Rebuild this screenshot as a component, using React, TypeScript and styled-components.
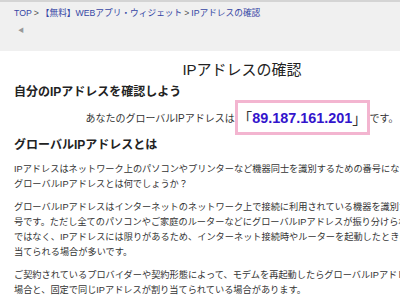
import React from 'react';
import styled, { createGlobalStyle } from 'styled-components';

const GlobalStyle = createGlobalStyle`
    html, body {
        margin: 0;
        padding: 0;
        background: #fff;
        overflow: hidden;
    }
    body {
        font-family: 'Liberation Sans', 'Noto Sans CJK JP', sans-serif;
        color: #333;
    }
`;

const Page = styled.div`
    width: 400px;
    height: 304px;
    overflow: hidden;
`;

const Header = styled.div`
    height: 44px;
    border-top: 2px solid #d4d4d4;
    background: #f0f0f0;
    padding: 5px 14px 0;
    box-sizing: content-box;
    width: 456px;
`;

const Crumbs = styled.div`
    font-size: 8.7px;
    line-height: 12px;
    white-space: nowrap;
    color: #444;
`;

const Crumb = styled.a`
    color: #3646a4;
    text-decoration: none;
`;

const Sep = styled.span`
    margin: 0 2px;
    color: #555;
`;

const Arrow = styled.div`
    margin: 6px 0 0 4px;
    font-size: 6px;
    line-height: 10px;
    color: #999;
`;

const Main = styled.div`
    width: 456px;
    padding: 0 14px;
`;

const Title = styled.h1`
    margin: 9px 0 0;
    font-size: 15px;
    line-height: 20px;
    font-weight: normal;
    color: #222;
    text-align: center;
`;

const Heading = styled.h2<{ $top: number }>`
    margin: ${p => p.$top}px 0 0;
    font-size: 12px;
    line-height: 16px;
    font-weight: bold;
    color: #222;
`;

const IpRow = styled.div`
    display: flex;
    justify-content: center;
    align-items: center;
    font-size: 10px;
    color: #333;
    white-space: nowrap;
`;

const IpBox = styled.span`
    display: inline-flex;
    align-items: center;
    height: 29px;
    border: 3px solid #f3b5d0;
    font-size: 14.4px;
    color: #333;
`;

const Ip = styled.strong`
    color: #3314cc;
    font-weight: bold;
`;

const Para = styled.p<{ $top: number }>`
    margin: ${p => p.$top}px 0 0;
    font-size: 9.2px;
    line-height: 15.3px;
    white-space: nowrap;
    color: #333;
`;

export default function App() {
    return (
        <Page>
            <GlobalStyle />
            <Header>
                <Crumbs>
                    <Crumb>TOP</Crumb>
                    <Sep>&gt;</Sep>
                    <Crumb>【無料】WEBアプリ・ウィジェット</Crumb>
                    <Sep>&gt;</Sep>
                    <Crumb>IPアドレスの確認</Crumb>
                </Crumbs>
                <Arrow>◀</Arrow>
            </Header>
            <Main>
                <Title>IPアドレスの確認</Title>
                <Heading $top={4}>自分のIPアドレスを確認しよう</Heading>
                <IpRow>
                    <span>あなたのグローバルIPアドレスは</span>
                    <IpBox>
                        「<Ip>89.187.161.201</Ip>」
                    </IpBox>
                    <span>です。</span>
                </IpRow>
                <Heading $top={2}>グローバルIPアドレスとは</Heading>
                <Para $top={9}>
                    IPアドレスはネットワーク上のパソコンやプリンターなど機器同士を識別するための番号になります。
                    <br />
                    グローバルIPアドレスとは何でしょうか？
                </Para>
                <Para $top={7}>
                    グローバルIPアドレスはインターネットのネットワーク上で接続に利用されている機器を識別するための番
                    <br />
                    号です。ただし全てのパソコンやご家庭のルーターなどにグローバルIPアドレスが振り分けられているわけ
                    <br />
                    ではなく、IPアドレスには限りがあるため、インターネット接続時やルーターを起動したときに自動で割り
                    <br />
                    当てられる場合が多いです。
                </Para>
                <Para $top={7}>
                    ご契約されているプロバイダーや契約形態によって、モデムを再起動したらグローバルIPアドレスが変わる
                    <br />
                    場合と、固定で同じIPアドレスが割り当てられている場合があります。
                </Para>
            </Main>
        </Page>
    );
}
